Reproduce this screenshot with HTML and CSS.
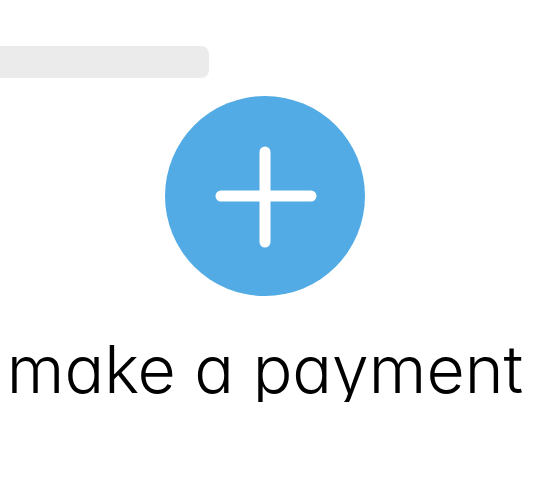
FILE: index.html
```html
<!DOCTYPE html>
<html>
<head>
<meta charset="utf-8">
<link rel="stylesheet" href="styles.css">
</head>
<body>
<div class="bar"></div>
<main class="main">
  <div class="circle">
    <svg width="200" height="200" viewBox="0 0 200 200">
      <path d="M100 56 V146 M56 100 H146" stroke="#fff" stroke-width="11" stroke-linecap="round" fill="none"/>
    </svg>
  </div>
  <div class="label">make a payment</div>
</main>
</body>
</html>
```
FILE: styles.css
```css
html, body {
  margin: 0;
  padding: 0;
  background: #ffffff;
}
.bar {
  margin-top: 46px;
  width: 209px;
  height: 32px;
  background: #ebebeb;
  border-radius: 0 8px 8px 0;
}
.main {
  width: 530px;
  display: flex;
  flex-direction: column;
  align-items: center;
  margin-top: 18px;
}
.circle {
  width: 200px;
  height: 200px;
  border-radius: 50%;
  background: #52abe4;
  display: flex;
}
.label {
  margin-top: 40px;
  font-family: "Inter", sans-serif;
  font-weight: 300;
  font-size: 66px;
  line-height: 66px;
  color: #000;
  font-feature-settings: "cv11" 1;
  white-space: nowrap;
}
```
